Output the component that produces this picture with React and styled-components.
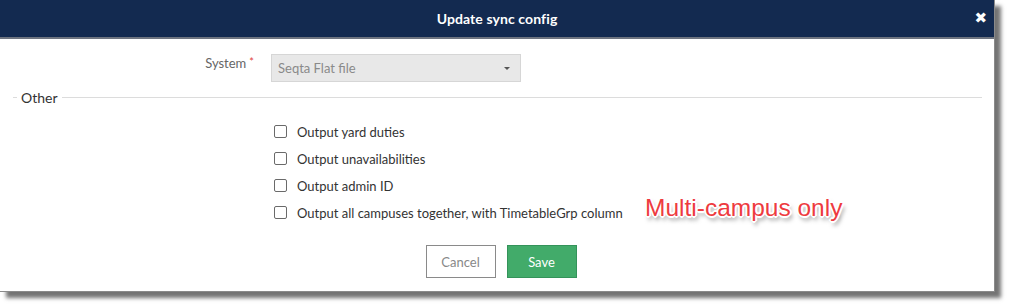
import React from 'react';
import styled, { createGlobalStyle } from 'styled-components';

const GlobalStyle = createGlobalStyle`
  html, body {
    margin: 0;
    padding: 0;
    background: #fff;
    font-family: Lato, "Open Sans", Arial, sans-serif;
  }
`;

const Page = styled.div`
  width: 1010px;
  height: 307px;
  overflow: hidden;
`;

const Dialog = styled.div`
  position: relative;
  width: 994px;
  height: 291px;
  background: #fff;
  border-right: 1px solid #8a8a8a;
  border-bottom: 1px solid #8a8a8a;
  box-shadow: 6px 6px 4px rgba(0, 0, 0, 0.55);
  display: flex;
  flex-direction: column;
`;

const Header = styled.div`
  height: 37px;
  background: #132a50;
  border-bottom: 2px solid #6e7480;
  display: flex;
  align-items: center;
  justify-content: center;
  position: relative;
  color: #fff;
`;

const Title = styled.div`
  font-size: 14px;
  font-weight: 700;
  letter-spacing: 0.1px;
`;

const Close = styled.span`
  position: absolute;
  right: 7px;
  top: 9px;
  font-size: 15px;
  line-height: 18px;
  font-family: "DejaVu Sans", sans-serif;
  font-weight: bold;
`;

const Body = styled.div`
  flex: 1;
  padding: 15px 12px 0 13px;
  display: flex;
  flex-direction: column;
`;

const FormRow = styled.div`
  display: grid;
  grid-template-columns: 243px 1fr;
  column-gap: 15px;
  align-items: start;
`;

const Label = styled.label`
  text-align: right;
  font-size: 13px;
  color: #666;
  padding-top: 1px;
  padding-right: 2px;
`;

const Req = styled.span`
  color: #e0443c;
  font-size: 11px;
  margin-left: 3px;
  vertical-align: 2px;
`;

const Select = styled.div`
  display: flex;
  align-items: center;
  justify-content: space-between;
  padding: 0 10px 0 6px;
  box-sizing: border-box;
  width: 250px;
  height: 28px;
  border: 1px solid #d6d6d6;
  background: #e8e8e8;
  font-size: 13px;
  color: #8a8a8a;
`;

const Caret = styled.span`
  width: 0;
  height: 0;
  border-left: 3px solid transparent;
  border-right: 3px solid transparent;
  border-top: 3px solid #555;
`;

const Fieldset = styled.fieldset`
  margin: 7px 0 0 0;
  padding: 0;
  border: none;
  border-top: 1px solid #dcdcdc;
  min-width: 0;
`;

const Legend = styled.legend`
  margin-left: 4px;
  padding: 0 4px;
  font-size: 14px;
  color: #333;
`;

const Checks = styled.div`
  padding-left: 261px;
  padding-top: 17px;
  display: flex;
  flex-direction: column;
  gap: 10px;
  position: relative;
`;

const CheckRow = styled.label`
  display: flex;
  align-items: center;
  height: 17px;
  font-size: 13px;
  color: #333;
`;

const Box = styled.span`
  width: 11px;
  height: 11px;
  border: 1px solid #6a6a6a;
  border-radius: 2px;
  margin-right: 10px;
  background: #fff;
`;

const Note = styled.div`
  position: absolute;
  left: 632px;
  top: 88px;
  font-family: "Liberation Sans", Arial, sans-serif;
  font-size: 24.5px;
  color: #ee3b3f;
  text-shadow:
    -1px -1px 0 #fff, 1px -1px 0 #fff, -1px 1px 0 #fff, 1px 1px 0 #fff,
    -2px 0 0 #fff, 2px 0 0 #fff, 0 -2px 0 #fff, 0 2px 0 #fff,
    2px 4px 4px rgba(0, 0, 0, 0.5);
`;

const Actions = styled.div`
  display: flex;
  justify-content: center;
  gap: 11px;
  margin-top: 24px;
  padding-left: 7px;
`;

const Button = styled.button`
  width: 70px;
  height: 33px;
  font-family: Lato, Arial, sans-serif;
  font-size: 13px;
  border-radius: 0;
  cursor: pointer;
  background: ${(p) => (p.$primary ? '#42ab6a' : '#fff')};
  color: ${(p) => (p.$primary ? '#fff' : '#888')};
  border: 1px solid ${(p) => (p.$primary ? '#34935a' : '#8a8a8a')};
`;

const options = [
  'Output yard duties',
  'Output unavailabilities',
  'Output admin ID',
  'Output all campuses together, with TimetableGrp column',
];

export default function App() {
  return (
    <Page>
      <GlobalStyle />
      <Dialog>
        <Header>
          <Title>Update sync config</Title>
          <Close>✖</Close>
        </Header>
        <Body>
          <FormRow>
            <Label>
              System<Req>*</Req>
            </Label>
            <Select>
              <span>Seqta Flat file</span>
              <Caret />
            </Select>
          </FormRow>
          <Fieldset>
            <Legend>Other</Legend>
            <Checks>
              {options.map((o) => (
                <CheckRow key={o}>
                  <Box />
                  {o}
                </CheckRow>
              ))}
              <Note>Multi-campus only</Note>
            </Checks>
          </Fieldset>
          <Actions>
            <Button>Cancel</Button>
            <Button $primary>Save</Button>
          </Actions>
        </Body>
      </Dialog>
    </Page>
  );
}
